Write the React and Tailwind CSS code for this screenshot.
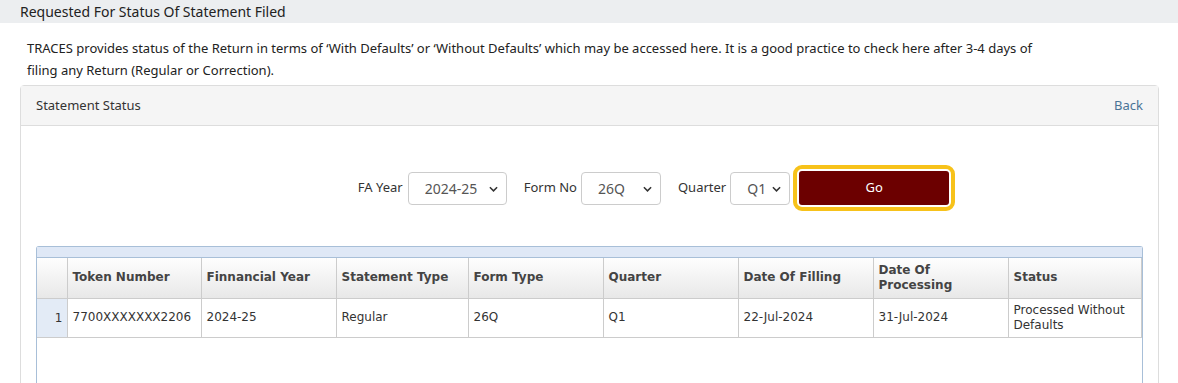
import React, { useState } from "react";

const columns = [
  { key: "token", label: "Token Number", w: "w-[134px]" },
  { key: "year", label: "Finnancial Year", w: "w-[135px]" },
  { key: "type", label: "Statement Type", w: "w-[132px]" },
  { key: "form", label: "Form Type", w: "w-[135px]" },
  { key: "quarter", label: "Quarter", w: "w-[135px]" },
  { key: "filed", label: "Date Of Filling", w: "w-[135px]" },
  { key: "processed", label: "Date Of Processing", w: "w-[135px]" },
  { key: "status", label: "Status", w: "" },
];

const rows = [
  {
    token: "7700XXXXXXX2206",
    year: "2024-25",
    type: "Regular",
    form: "26Q",
    quarter: "Q1",
    filed: "22-Jul-2024",
    processed: "31-Jul-2024",
    status: "Processed Without Defaults",
  },
];

function Select({ value, options, onChange, width }) {
  return (
    <div className={`relative ${width}`}>
      <select
        value={value}
        onChange={(e) => onChange(e.target.value)}
        className="w-full h-[33px] appearance-none border border-[#ccc] rounded bg-white pl-[16px] pr-6 text-[14px] text-[#555] outline-none"
      >
        {options.map((o) => (
          <option key={o}>{o}</option>
        ))}
      </select>
      <svg
        viewBox="0 0 10 6"
        className="pointer-events-none absolute right-[9px] top-[14px] w-[9px] h-[6px]"
      >
        <path d="M1 1l4 4 4-4" fill="none" stroke="#333" strokeWidth="1.7" />
      </svg>
    </div>
  );
}

export default function App() {
  const [year, setYear] = useState("2024-25");
  const [form, setForm] = useState("26Q");
  const [quarter, setQuarter] = useState("Q1");

  return (
    <div className="h-[383px] overflow-hidden bg-white text-[#333] font-['Segoe_UI','Noto_Sans',sans-serif]">
      <div className="h-[23px] bg-[#eceef0] pl-5 text-[14px] leading-[23px] text-[#222]">
        Requested For Status Of Statement Filed
      </div>

      <p className="pl-[27px] pt-[14px] pb-[4px] text-[13px] leading-[22px] text-[#222]">
        TRACES provides status of the Return in terms of ‘With Defaults’ or ‘Without Defaults’ which may be
        accessed here. It is a good practice to check here after 3-4 days of
        <br />
        filing any Return (Regular or Correction).
      </p>

      <div className="ml-5 mr-[19px] border border-[#ddd] rounded-t h-[300px]">
        <div className="h-[40px] bg-[#f5f5f5] border-b border-[#ddd] flex items-center justify-between px-[15px] text-[13px]">
          <span className="text-[#333]">Statement Status</span>
          <a href="#" className="text-[#4a7396]">Back</a>
        </div>

        <div className="flex items-center justify-center pt-[45px] pl-[128px] text-[13px] text-[#333]">
          <label className="mr-[5px]">FA Year</label>
          <Select value={year} onChange={setYear} options={["2024-25", "2023-24", "2022-23"]} width="w-[99px]" />
          <label className="ml-[17px] mr-[4px]">Form No</label>
          <Select value={form} onChange={setForm} options={["26Q", "24Q", "27Q", "27EQ"]} width="w-[80px]" />
          <label className="ml-[17px] mr-[4px]">Quarter</label>
          <Select value={quarter} onChange={setQuarter} options={["Q1", "Q2", "Q3", "Q4"]} width="w-[60px]" />
          <button className="ml-[9px] w-[150px] h-[34px] bg-[#6c0000] text-white text-[13px] rounded-[3px] outline-[4px] outline-solid outline-[#f7c21a] outline-offset-[2px]">
            Go
          </button>
        </div>

        <div className="mt-[41px] mx-[15px] border border-[#a8bfd8] border-b-0 rounded-t-[3px] h-[200px] font-['DejaVu_Sans','Verdana',sans-serif]">
          <div className="h-[11px] bg-[#dfe8f6] border-b border-[#a8bfd8]"></div>
          <table className="w-full border-collapse text-[12px] text-[#333]">
            <thead>
              <tr className="h-[40px] bg-linear-to-b from-[#fefefe] to-[#e8e8e8]">
                <th className="w-[30px] border-r border-b border-[#ccc]"></th>
                {columns.map((c) => (
                  <th
                    key={c.key}
                    className={`${c.w} border-r border-b border-[#ccc] px-[5px] text-left font-bold text-[#444] leading-[15px]`}
                  >
                    {c.label === "Date Of Processing" ? (
                      <>
                        Date Of
                        <br />
                        Processing
                      </>
                    ) : (
                      c.label
                    )}
                  </th>
                ))}
              </tr>
            </thead>
            <tbody>
              {rows.map((r, i) => (
                <tr key={r.token} className="h-[39px]">
                  <td className="bg-[#e3ebf6] border-r border-b border-[#ccc] text-right pr-[4px]">{i + 1}</td>
                  {columns.map((c) => (
                    <td key={c.key} className="border-r border-b border-[#ccc] px-[5px] leading-[15px]">
                      {r[c.key]}
                    </td>
                  ))}
                </tr>
              ))}
            </tbody>
          </table>
        </div>
      </div>
    </div>
  );
}
